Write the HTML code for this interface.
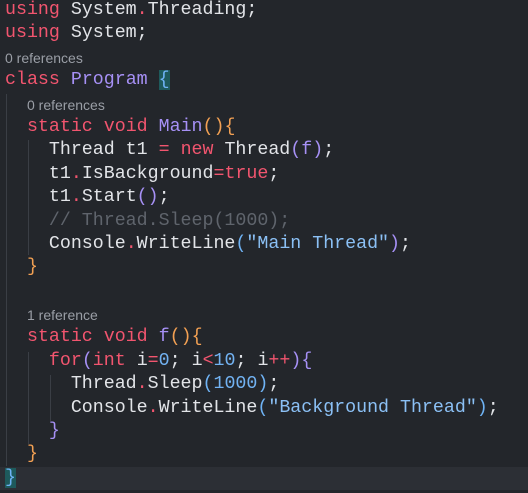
<!DOCTYPE html>
<html><head><meta charset="utf-8"><style>
html,body{margin:0;padding:0;background:#23262b;width:528px;height:493px;overflow:hidden}
.c{position:absolute;left:0;top:-1px;width:528px}
.l{height:23.4px;line-height:23.4px;white-space:pre;font-family:"Liberation Mono",monospace;font-size:18.3px;color:#e2e4e8;padding-left:5px;position:relative}
.cl{font-family:"Liberation Sans",sans-serif;font-size:14px;color:#9a9ea6;line-height:25px;height:23.4px}
.k{color:#f2556f}.p{color:#a690f5}.o{color:#f2a053}.b{color:#6fb3f5}.n{color:#72b2f2}.s{color:#8bc0f5}.cm{color:#5f646c}
.hl{background:#1e5a5c}
.last{background:#2c2f35}
.g{position:absolute;width:1px;background:#3a3e45}
</style></head><body>
<div class="g" style="left:6px;top:94px;height:372px"></div>
<div class="g" style="left:28px;top:140px;height:115px"></div>
<div class="g" style="left:28px;top:352px;height:92px"></div>
<div class="g" style="left:50px;top:375px;height:46px"></div>
<div class="c">
<div class="l"><span class="k">using</span> System<span class="k">.</span>Threading;</div>
<div class="l"><span class="k">using</span> System;</div>
<div class="l cl">0 references</div>
<div class="l"><span class="k">class</span> <span class="p">Program</span> <span class="b hl">{</span></div>
<div class="l cl" style="padding-left:27px">0 references</div>
<div class="l">  <span class="k">static</span> <span class="k">void</span> <span class="p">Main</span><span class="o">()</span><span class="o">{</span></div>
<div class="l">    Thread t1 <span class="k">=</span> <span class="k">new</span> Thread<span class="p">(</span><span class="p">f</span><span class="p">)</span>;</div>
<div class="l">    t1<span class="k">.</span>IsBackground<span class="k">=true</span>;</div>
<div class="l">    t1<span class="k">.</span>Start<span class="p">()</span>;</div>
<div class="l">    <span class="cm">// Thread.Sleep(1000);</span></div>
<div class="l">    Console<span class="k">.</span>WriteLine<span class="b">(</span><span class="s">"Main Thread"</span><span class="p">)</span>;</div>
<div class="l">  <span class="o">}</span></div>
<div class="l"> </div>
<div class="l cl" style="padding-left:27px">1 reference</div>
<div class="l">  <span class="k">static</span> <span class="k">void</span> <span class="p">f</span><span class="o">()</span><span class="o">{</span></div>
<div class="l">    <span class="k">for</span><span class="p">(</span><span class="k">int</span> i<span class="k">=</span><span class="n">0</span>; i<span class="k">&lt;</span><span class="n">10</span>; i<span class="k">++</span><span class="p">)</span><span class="p">{</span></div>
<div class="l">      Thread<span class="k">.</span>Sleep<span class="b">(</span><span class="n">1000</span><span class="b">)</span>;</div>
<div class="l">      Console<span class="k">.</span>WriteLine<span class="b">(</span><span class="s">"Background Thread"</span><span class="b">)</span>;</div>
<div class="l">    <span class="p">}</span></div>
<div class="l">  <span class="o">}</span></div>
<div class="l last"><span class="b hl">}</span></div>
</div>
</body></html>
